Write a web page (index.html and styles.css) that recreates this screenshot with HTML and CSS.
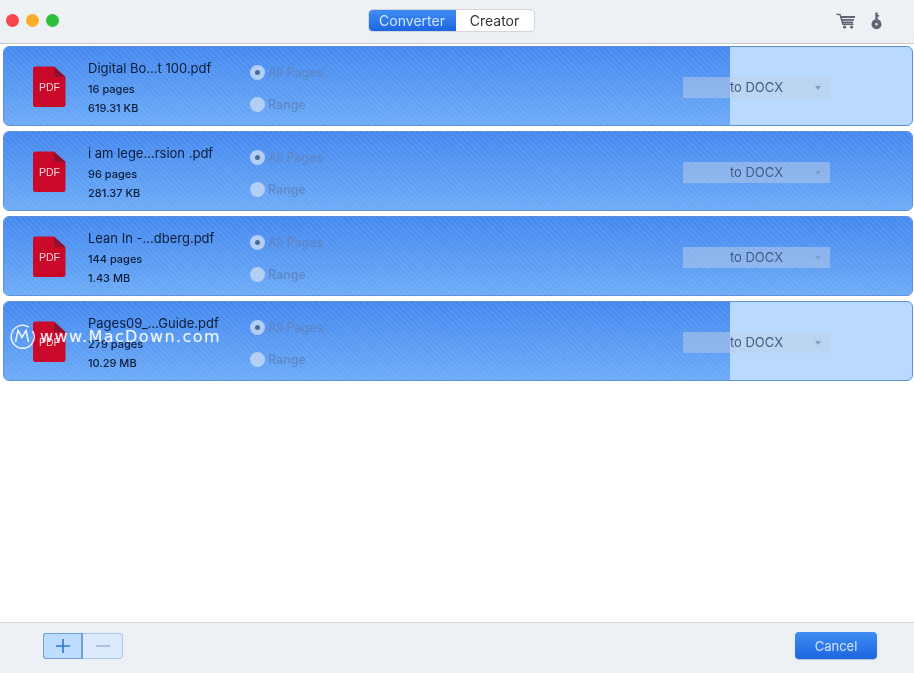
FILE: index.html
```html
<!DOCTYPE html>
<html lang="en">
<head>
<meta charset="utf-8">
<title>PDF Converter</title>
<link rel="stylesheet" href="styles.css">
</head>
<body>
<div class="window">
  <header class="titlebar">
    <div class="lights">
      <span class="light red"></span><span class="light yellow"></span><span class="light green"></span>
    </div>
    <div class="segments">
      <span class="seg seg-on">Converter</span><span class="seg">Creator</span>
    </div>
    <div class="tools">
      <svg class="cart" width="20" height="16" viewBox="0 0 20 16"><path d="M0.5 1.2 L4 1.6 L7 11.2 H17.5" fill="none" stroke="#5d6670" stroke-width="1.5"/><path d="M4.6 3 H19.4 L18.6 5 H5.2 Z M5.6 6 H18.2 L17.6 7.8 H6.1 Z M6.4 8.6 H17.2 L16.8 10.2 H6.9 Z" fill="#5d6670"/><circle cx="8.6" cy="14" r="1.6" fill="#5d6670"/><circle cx="15.6" cy="14" r="1.6" fill="#5d6670"/></svg>
      <svg class="key" width="11" height="18" viewBox="0 0 11 18"><path d="M4.3 0.5 H6.7 V8 H4.3 Z M6.7 3 H8.2 V4.4 H6.7 Z" fill="#5d6670"/><path d="M5.5 7.2 A5 5 0 1 1 5.49 7.2 Z M5.5 10.9 A1.3 1.3 0 1 0 5.51 10.9 Z" fill="#5d6670" fill-rule="evenodd"/></svg>
    </div>
  </header>

  <main class="list">
    <section class="row">
      <div class="fill"></div>
      <svg class="pdf" width="33" height="42" viewBox="0 0 33 42"><path d="M2.5 0.5 H21 L32.5 11 V38.5 A2.5 2.5 0 0 1 30 41 H2.5 A2.5 2.5 0 0 1 0 38.5 V3 A2.5 2.5 0 0 1 2.5 0.5 Z" fill="#c9082a"/><path d="M21 0.5 L32.5 11 H23 A2 2 0 0 1 21 9 Z" fill="#8e1230"/><text x="16.5" y="25" class="pdf-label">PDF</text></svg>
      <div class="info"><div class="name">Digital Bo...t 100.pdf</div><div class="meta">16 pages</div><div class="meta">619.31 KB</div></div>
      <div class="pages"><div class="radio-line"><span class="radio radio-on"></span>All Pages</div><div class="radio-line"><span class="radio"></span>Range</div></div>
      <div class="format">to DOCX<span class="caret"></span></div>
    </section>
    <section class="row row-full">
      <div class="fill"></div>
      <svg class="pdf" width="33" height="42" viewBox="0 0 33 42"><path d="M2.5 0.5 H21 L32.5 11 V38.5 A2.5 2.5 0 0 1 30 41 H2.5 A2.5 2.5 0 0 1 0 38.5 V3 A2.5 2.5 0 0 1 2.5 0.5 Z" fill="#c9082a"/><path d="M21 0.5 L32.5 11 H23 A2 2 0 0 1 21 9 Z" fill="#8e1230"/><text x="16.5" y="25" class="pdf-label">PDF</text></svg>
      <div class="info"><div class="name">i am lege...rsion .pdf</div><div class="meta">96 pages</div><div class="meta">281.37 KB</div></div>
      <div class="pages"><div class="radio-line"><span class="radio radio-on"></span>All Pages</div><div class="radio-line"><span class="radio"></span>Range</div></div>
      <div class="format">to DOCX<span class="caret"></span></div>
    </section>
    <section class="row row-full">
      <div class="fill"></div>
      <svg class="pdf" width="33" height="42" viewBox="0 0 33 42"><path d="M2.5 0.5 H21 L32.5 11 V38.5 A2.5 2.5 0 0 1 30 41 H2.5 A2.5 2.5 0 0 1 0 38.5 V3 A2.5 2.5 0 0 1 2.5 0.5 Z" fill="#c9082a"/><path d="M21 0.5 L32.5 11 H23 A2 2 0 0 1 21 9 Z" fill="#8e1230"/><text x="16.5" y="25" class="pdf-label">PDF</text></svg>
      <div class="info"><div class="name">Lean In -...dberg.pdf</div><div class="meta">144 pages</div><div class="meta">1.43 MB</div></div>
      <div class="pages"><div class="radio-line"><span class="radio radio-on"></span>All Pages</div><div class="radio-line"><span class="radio"></span>Range</div></div>
      <div class="format">to DOCX<span class="caret"></span></div>
    </section>
    <section class="row">
      <div class="fill"></div>
      <svg class="pdf" width="33" height="42" viewBox="0 0 33 42"><path d="M2.5 0.5 H21 L32.5 11 V38.5 A2.5 2.5 0 0 1 30 41 H2.5 A2.5 2.5 0 0 1 0 38.5 V3 A2.5 2.5 0 0 1 2.5 0.5 Z" fill="#c9082a"/><path d="M21 0.5 L32.5 11 H23 A2 2 0 0 1 21 9 Z" fill="#8e1230"/><text x="16.5" y="25" class="pdf-label">PDF</text></svg>
      <div class="info"><div class="name">Pages09_...Guide.pdf</div><div class="meta">279 pages</div><div class="meta">10.29 MB</div></div>
      <div class="pages"><div class="radio-line"><span class="radio radio-on"></span>All Pages</div><div class="radio-line"><span class="radio"></span>Range</div></div>
      <div class="format">to DOCX<span class="caret"></span></div>
    </section>
  </main>

  <footer class="footer">
    <div class="stepper">
      <span class="step step-on"><svg width="16" height="16" viewBox="0 0 16 16"><path d="M8 1 V15 M1 8 H15" stroke="#2f74d8" stroke-width="1.6"/></svg></span><span class="step"><svg width="16" height="16" viewBox="0 0 16 16"><path d="M1 8 H15" stroke="#9db7d6" stroke-width="1.6"/></svg></span>
    </div>
    <button class="cancel" type="button">Cancel</button>
  </footer>

  <div class="watermark">
    <svg width="26" height="26" viewBox="0 0 26 26"><path d="M20 4.2 A11.5 11.5 0 1 0 23.6 8" fill="none" stroke="#fff" stroke-width="1.5"/><path d="M6.5 19 L9 7.5 L13 14.5 L17 7.5 L19.5 19" fill="none" stroke="#fff" stroke-width="1.6"/></svg>
    <span>www.MacDown.com</span>
  </div>
</div>
</body>
</html>
```
FILE: styles.css
```css
* { box-sizing: border-box; }
html, body { margin: 0; padding: 0; background: #fff; }
body { font-family: "Inter", "Liberation Sans", sans-serif; }
.window {
  position: relative;
  width: 914px;
  height: 673px;
  display: flex;
  flex-direction: column;
  overflow: hidden;
  filter: blur(0.4px);
}

/* title bar */
.titlebar {
  height: 44px;
  flex: none;
  display: grid;
  grid-template-columns: 1fr auto 1fr;
  align-items: center;
  padding: 0 18px 3px 6px;
  background: linear-gradient(#f0f2f5, #ecf0f4);
  border-bottom: 1px solid #c9c9cb;
}
.lights { display: flex; gap: 7px; }
.light { width: 13px; height: 13px; border-radius: 50%; }
.red { background: #f8454a; }
.yellow { background: #fbae2b; }
.green { background: #2dc03c; }
.segments {
  display: flex;
  width: 165px;
  height: 21px;
  border-radius: 4px;
  overflow: hidden;
  background: #fff;
  box-shadow: 0 0 0 1px #d2d5d9, 0 1px 1px #c3c6ca;
  font-size: 14px;
  line-height: 21px;
  color: #333;
  text-align: center;
}
.seg { flex: 1 1 0; }
.seg-on {
  flex: none;
  width: 87px;
  color: #cfe4ff;
  background: linear-gradient(#3f8df3, #1c66e0);
}
.tools { display: flex; justify-content: flex-end; align-items: center; gap: 15px; padding-right: 14px; }
.cart { margin-top: 1px; }
.key { margin-top: 1px; }

/* rows */
.list {
  flex: 1;
  display: flex;
  flex-direction: column;
  gap: 5px;
  padding: 2px 1px 0 3px;
  background: #fff;
}
.row {
  position: relative;
  height: 80px;
  flex: none;
  display: flex;
  align-items: stretch;
  border: 1px solid #5f8fdc;
  border-radius: 6px;
  overflow: hidden;
  background: #b9dafe;
}
.fill {
  position: absolute;
  left: 0;
  top: 0;
  bottom: 0;
  width: 726px;
  background:
    repeating-linear-gradient(45deg, rgba(255,255,255,.06) 0 2px, rgba(255,255,255,0) 2px 4px),
    linear-gradient(#4488ef, #6cabf7);
}
.row-full .fill { width: 100%; }
.pdf { position: relative; flex: none; margin: 19px 0 0 29px; }
.pdf-label { font: 400 10.5px "Liberation Sans", sans-serif; fill: #f8d5da; text-anchor: middle; }
.info {
  position: relative;
  flex: none;
  width: 162px;
  margin-left: 22px;
  padding-top: 13px;
  color: #0b1c36;
}
.name { font-size: 13px; line-height: 17px; height: 21px; }
.meta { font-size: 11px; line-height: 16px; height: 19px; font-weight: 500; }
.pages {
  position: relative;
  flex: none;
  width: 150px;
  padding-top: 15px;
  display: flex;
  flex-direction: column;
  gap: 12px;
  color: #5f86c4;
  font-size: 12.5px;
  font-weight: 500;
}
.radio-line { display: flex; align-items: center; gap: 3px; height: 20px; }
.radio {
  width: 15px;
  height: 15px;
  border-radius: 50%;
  background: #b4cff5;
  display: flex;
  align-items: center;
  justify-content: center;
}
.radio-on::after {
  content: "";
  width: 5px;
  height: 5px;
  border-radius: 50%;
  background: #4a6a9c;
}
.format {
  position: relative;
  flex: none;
  align-self: flex-start;
  width: 147px;
  height: 21px;
  margin: 30px 0 0 283px;
  background: rgba(190, 205, 230, .5);
  color: #3f5a85;
  font-size: 13px;
  line-height: 21px;
  text-align: center;
}
.caret {
  position: absolute;
  right: 9px;
  top: 9px;
  border: 3px solid transparent;
  border-top: 4px solid #7f9cc8;
  border-bottom: 0;
}

/* footer */
.footer {
  height: 51px;
  flex: none;
  display: flex;
  align-items: flex-start;
  justify-content: space-between;
  padding: 9px 37px 0 43px;
  background: #edf1f5;
  border-top: 1px solid #d3d4d6;
}
.stepper {
  display: flex;
  width: 80px;
  height: 26px;
  margin-top: 1px;
  border: 1px solid #a9c6ec;
  border-radius: 3px;
  background: #dcebfb;
}
.step { flex: 1 1 0; display: flex; align-items: center; justify-content: center; }
.step-on {
  background: #bedcfd;
  border: 1px solid #6e9fe0;
  border-width: 1px 2px 1px 1px;
  margin: -1px 0 -1px -1px;
  border-radius: 3px 0 0 3px;
  flex: none;
  width: 40px;
}
.cancel {
  width: 82px;
  height: 27px;
  border: 0;
  border-radius: 4px;
  background: linear-gradient(#3f8df3, #1c66e0);
  color: #d5e6fd;
  font: 13px "Inter", "Liberation Sans", sans-serif;
  box-shadow: 0 1px 1px #b9c3d0;
}

/* watermark */
.watermark {
  position: absolute;
  left: 9px;
  top: 323px;
  display: flex;
  align-items: center;
  gap: 5px;
  color: #fff;
  font: 16px "DejaVu Sans", sans-serif;
  letter-spacing: 1.4px;
  opacity: .88;
  text-shadow: 0 0 1px rgba(255,255,255,.6);
}
```
